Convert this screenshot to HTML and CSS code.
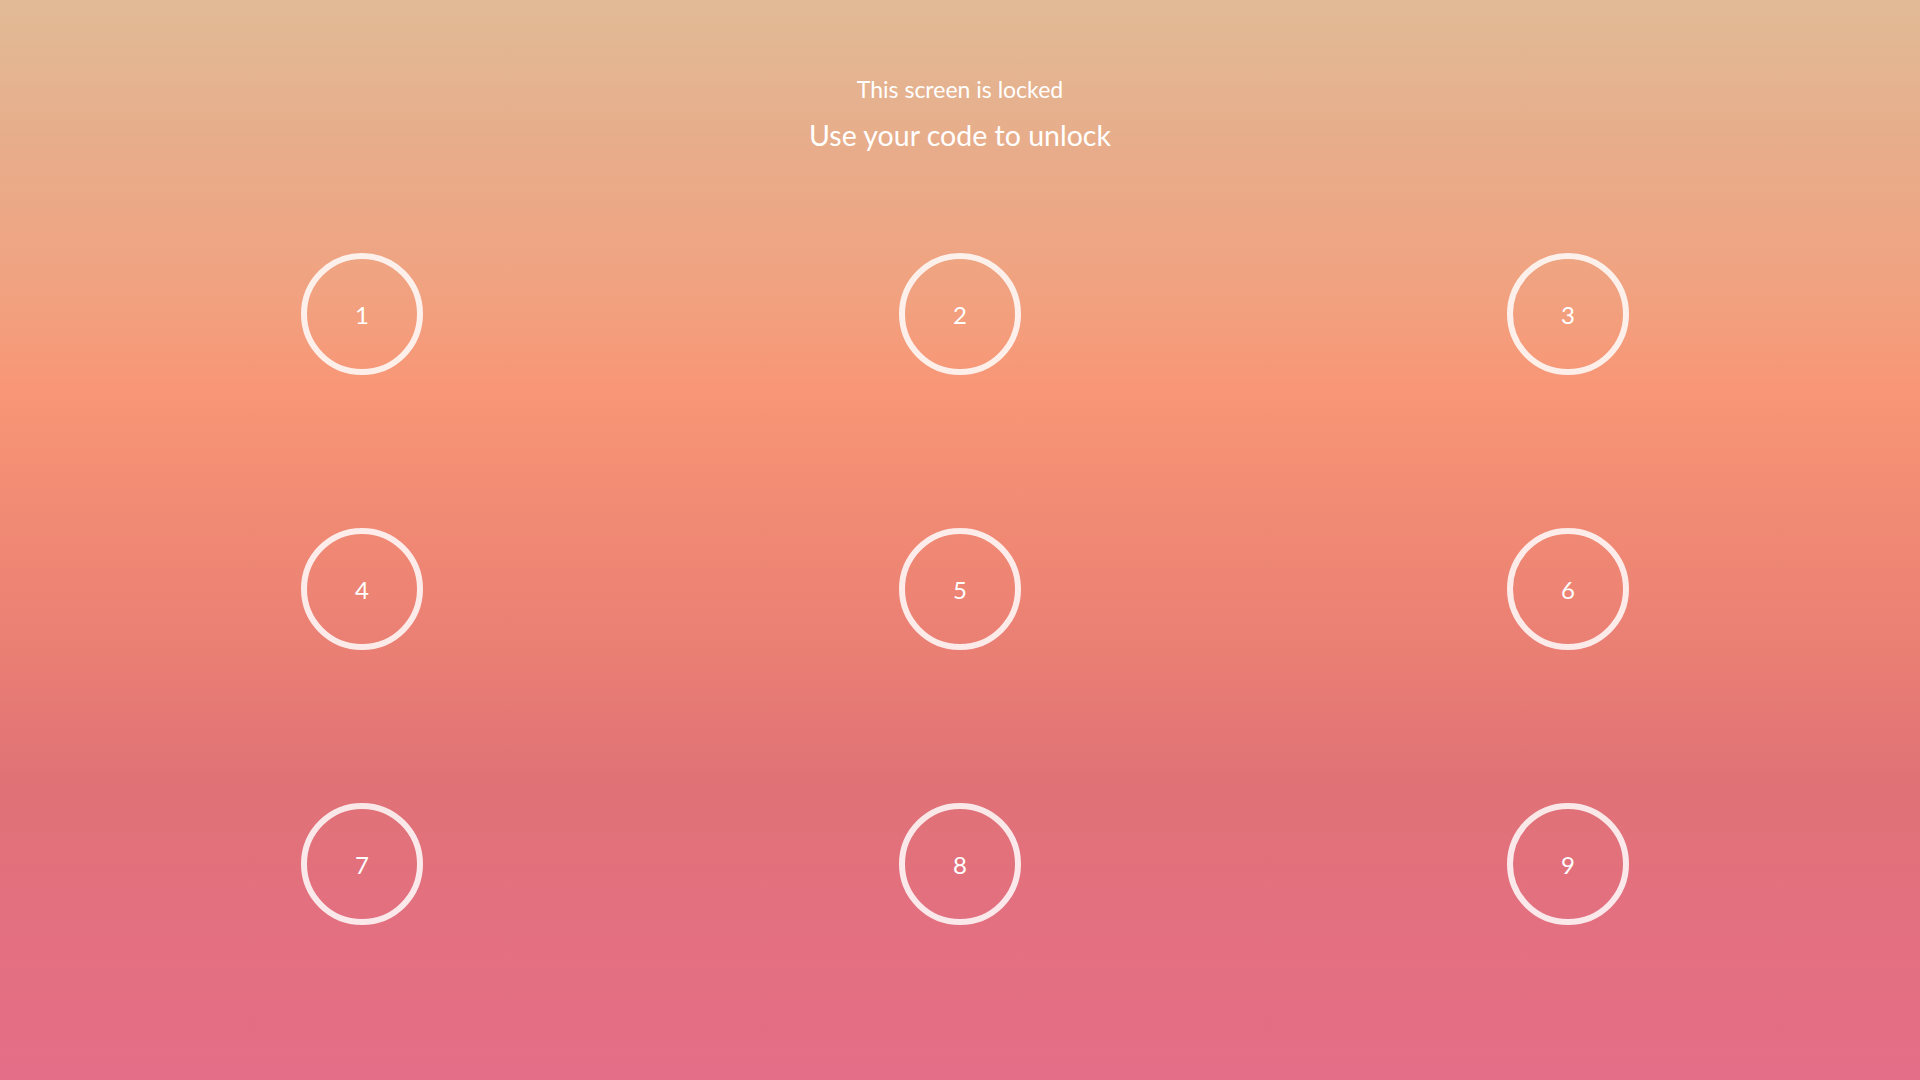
FILE: index.html
```html
<!DOCTYPE html>
<html lang="en">
<head>
<meta charset="utf-8">
<title>Locked</title>
<link rel="stylesheet" href="styles.css">
</head>
<body>
<main class="lock">
  <header class="lock-header">
    <p class="lock-sub">This screen is locked</p>
    <h1 class="lock-title">Use your code to unlock</h1>
  </header>
  <section class="keypad">
    <div class="key-row">
      <button class="key">1</button>
      <button class="key">2</button>
      <button class="key">3</button>
    </div>
    <div class="key-row">
      <button class="key">4</button>
      <button class="key">5</button>
      <button class="key">6</button>
    </div>
    <div class="key-row">
      <button class="key">7</button>
      <button class="key">8</button>
      <button class="key">9</button>
    </div>
  </section>
</main>
</body>
</html>
```
FILE: styles.css
```css
html, body {
  margin: 0;
  padding: 0;
  width: 1920px;
  height: 1080px;
  overflow: hidden;
}
body {
  font-family: "Lato", "Open Sans", sans-serif;
  color: #fff;
  background: linear-gradient(to bottom,
    rgb(225,187,150) 0%,
    rgb(232,172,138) 14%,
    rgb(241,162,128) 27%,
    rgb(248,150,118) 36%,
    rgb(242,140,116) 46%,
    rgb(233,125,116) 62%,
    rgb(224,114,118) 72%,
    rgb(227,112,127) 84%,
    rgb(228,110,135) 100%);
}
.lock {
  display: flex;
  flex-direction: column;
  height: 1080px;
}
.lock-header {
  display: flex;
  flex-direction: column;
  align-items: center;
  padding-top: 75px;
}
.lock-sub {
  margin: 0;
  font-size: 23px;
  line-height: 28px;
  font-weight: 400;
}
.lock-title {
  margin: 15px 0 0;
  font-size: 28.5px;
  line-height: 34px;
  font-weight: 400;
}
.keypad {
  display: flex;
  flex-direction: column;
  gap: 153px;
  padding: 0 0 0 301px;
  margin-top: 101px;
}
.key-row {
  display: flex;
  gap: 476px;
}
.key {
  flex: none;
  width: 122px;
  height: 122px;
  box-sizing: border-box;
  border-radius: 50%;
  border: 6px solid rgba(255,255,255,0.84);
  background: transparent;
  color: #fff;
  font-family: "Lato", "Open Sans", sans-serif;
  font-size: 24px;
  padding: 0;
  display: flex;
  align-items: center;
  justify-content: center;
}
.key:last-child {
  margin-left: 10px;
}
```
